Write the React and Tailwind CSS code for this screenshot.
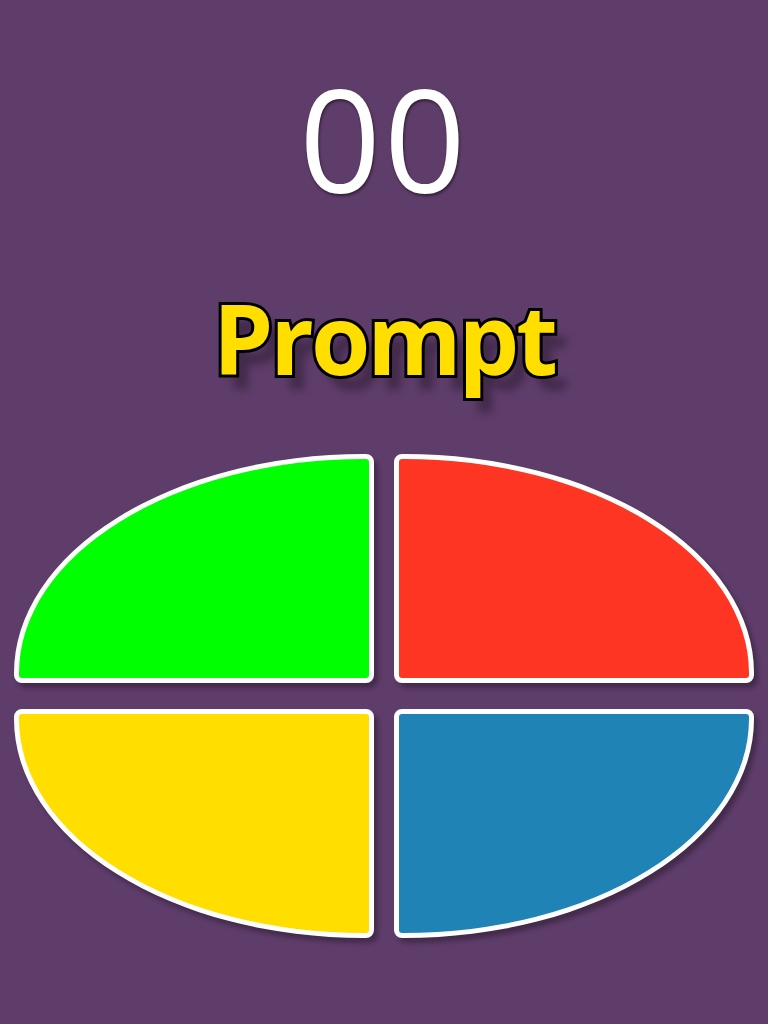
import React from 'react';

const quads = [
  { color: 'bg-[#00ff00]', shape: 'rounded-tl-[350px_219px] rounded-tr-[8px] rounded-br-[8px] rounded-bl-[8px]' },
  { color: 'bg-[#ff3524]', shape: 'rounded-tr-[350px_219px] rounded-tl-[8px] rounded-br-[8px] rounded-bl-[8px]' },
  { color: 'bg-[#ffde00]', shape: 'rounded-bl-[350px_219px] rounded-tl-[8px] rounded-tr-[8px] rounded-br-[8px]' },
  { color: 'bg-[#1f84b5]', shape: 'rounded-br-[350px_219px] rounded-tl-[8px] rounded-tr-[8px] rounded-bl-[8px]' },
];

const App = () => {
  return (
    <div className="min-h-[1024px] w-full bg-[#5f3d6b] flex flex-col items-center font-['Open_Sans',sans-serif]">
      <div className="mt-[66px] text-white text-[143px] leading-none tracking-[3px] [text-shadow:1px_2px_3px_rgba(0,0,0,0.5)]">
        00
      </div>

      <div className="mt-[81px] text-[#ffde00] text-[96px] font-bold leading-none tracking-[-3px] [-webkit-text-stroke:6px_black] [paint-order:stroke_fill] [text-shadow:12px_15px_8px_rgba(0,0,0,0.3)]">
        Prompt
      </div>

      <div className="mt-[68px] grid grid-cols-[360px_360px] gap-x-[20px] gap-y-[26px]">
        {quads.map((q, i) => (
          <div
            key={i}
            className={`h-[229px] border-[5px] border-white shadow-[4px_5px_5px_rgba(0,0,0,0.3)] ${q.color} ${q.shape}`}
          />
        ))}
      </div>
    </div>
  );
};

export default App;
